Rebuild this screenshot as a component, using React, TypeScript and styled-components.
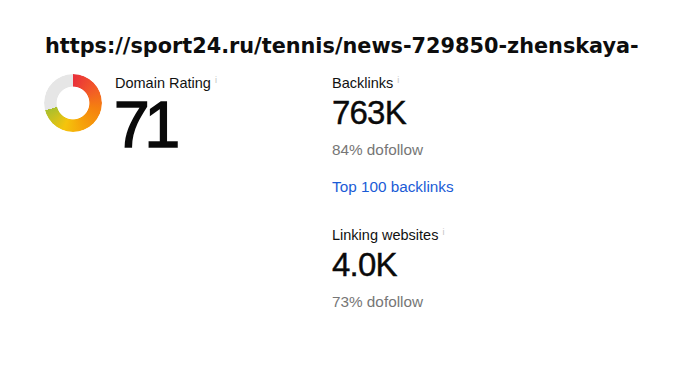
import React from 'react';
import styled, { createGlobalStyle } from 'styled-components';

const GlobalStyle = createGlobalStyle`
  html, body {
    margin: 0;
    padding: 0;
    background: #ffffff;
  }
  body {
    font-family: "Liberation Sans", Arial, sans-serif;
    color: #111111;
  }
`;

interface Metric {
  label: string;
  value: string;
  sub: string;
  link?: string;
}

const metrics: Metric[] = [
  { label: 'Backlinks', value: '763K', sub: '84% dofollow', link: 'Top 100 backlinks' },
  { label: 'Linking websites', value: '4.0K', sub: '73% dofollow' },
];

const App: React.FC = () => {
  const rating = 71;

  return (
    <>
      <GlobalStyle />
      <Page>
        <UrlTitle>https://sport24.ru/tennis/news-729850-zhenskaya-</UrlTitle>
        <Overview>
          <RatingBlock>
            <Donut $percent={rating} />
            <RatingText>
              <Label>
                Domain Rating<Info>i</Info>
              </Label>
              <BigNumber>{rating}</BigNumber>
            </RatingText>
          </RatingBlock>

          <MetricsColumn>
            {metrics.map((m) => (
              <MetricCard key={m.label}>
                <Label>
                  {m.label}
                  <Info>i</Info>
                </Label>
                <Value>{m.value}</Value>
                <SubText>{m.sub}</SubText>
                {m.link && <MetricLink href="#">{m.link}</MetricLink>}
              </MetricCard>
            ))}
          </MetricsColumn>
        </Overview>
      </Page>
    </>
  );
};

const Page = styled.div`
  padding: 33px 0 0 45px;
`;

const UrlTitle = styled.h1`
  margin: 0;
  font-family: "DejaVu Sans", "Liberation Sans", sans-serif;
  font-size: 20.8px;
  font-weight: 700;
  line-height: 26px;
  letter-spacing: 0;
  color: #0d0d0d;
  white-space: nowrap;
`;

const Overview = styled.div`
  display: flex;
  margin-top: 16px;
`;

const RatingBlock = styled.div`
  display: flex;
  align-items: flex-start;
  width: 287px;
`;

const Donut = styled.div<{ $percent: number }>`
  width: 58px;
  height: 58px;
  margin-top: -1px;
  margin-left: -1px;
  border-radius: 50%;
  flex-shrink: 0;
  background: ${({ $percent }) => {
    const end = ($percent / 100) * 360;
    return `conic-gradient(
      #e8303a 0deg,
      #f2562a ${end * 0.2}deg,
      #f5800f ${end * 0.4}deg,
      #f6a40a ${end * 0.62}deg,
      #f5c40c ${end * 0.78}deg,
      #a9bf2e ${end}deg,
      #e6e6e6 ${end}deg,
      #e6e6e6 360deg
    )`;
  }};
  -webkit-mask: radial-gradient(circle, transparent 16px, #000 16.8px);
  mask: radial-gradient(circle, transparent 16px, #000 16.8px);
`;

const RatingText = styled.div`
  display: flex;
  flex-direction: column;
  margin-left: 13px;
`;

const Label = styled.div`
  font-size: 14.5px;
  line-height: 16px;
  color: #111111;
  white-space: nowrap;
`;

const Info = styled.sup`
  font-size: 9px;
  color: #c4c4c4;
  margin-left: 4px;
  vertical-align: 5px;
  line-height: 0;
`;

const BigNumber = styled.div`
  font-size: 64px;
  line-height: 64px;
  font-weight: 400;
  letter-spacing: -5px;
  color: #0a0a0a;
  margin-top: 2px;
  margin-left: -1px;
  -webkit-text-stroke: 1.6px #0a0a0a;
`;

const MetricsColumn = styled.div`
  display: flex;
  flex-direction: column;
  gap: 31px;
`;

const MetricCard = styled.div`
  display: flex;
  flex-direction: column;
  align-items: flex-start;
`;

const Value = styled.div`
  font-size: 33px;
  line-height: 38px;
  font-weight: 400;
  letter-spacing: -0.8px;
  color: #0a0a0a;
  margin-top: 3px;
  -webkit-text-stroke: 0.4px #0a0a0a;
`;

const SubText = styled.div`
  font-size: 15.3px;
  line-height: 18px;
  color: #767676;
  margin-top: 9px;
`;

const MetricLink = styled.a`
  font-size: 15.3px;
  line-height: 18px;
  color: #1a5bd6;
  text-decoration: none;
  margin-top: 19px;
`;

export default App;
